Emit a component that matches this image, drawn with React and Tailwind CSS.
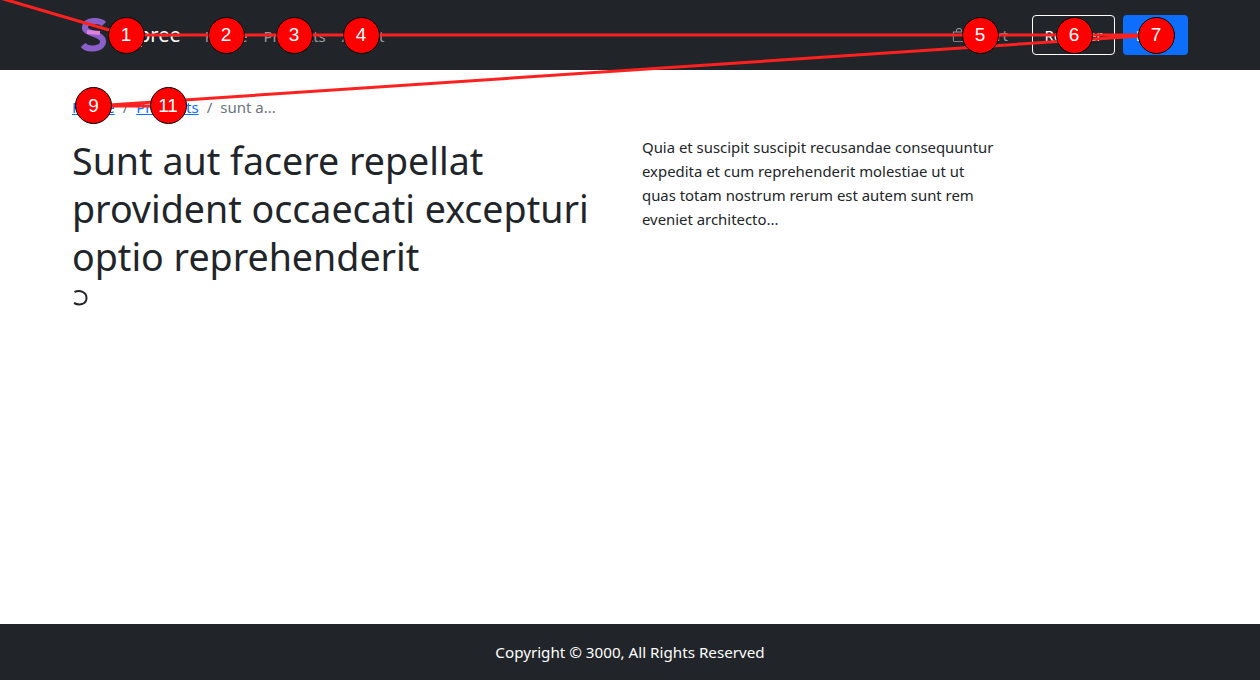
const pins = [
  { n: "1", x: 126, y: 35 },
  { n: "2", x: 226, y: 35 },
  { n: "3", x: 294, y: 35 },
  { n: "4", x: 361, y: 35 },
  { n: "5", x: 980, y: 35 },
  { n: "6", x: 1074, y: 35 },
  { n: "7", x: 1156, y: 35 },
  { n: "9", x: 93.5, y: 105.5 },
  { n: "11", x: 168, y: 105.5 },
];

function Overlay() {
  return (
    <div className="absolute inset-0 overflow-hidden pointer-events-none">
      <svg className="absolute left-0 top-0" width="1260" height="680" fill="none">
        <polyline
          points="0,-2 126,35 226,35 294,35 361,35 980,35 1074,35 1156,35 94,106 168,106"
          stroke="#ff2020"
          strokeWidth="3"
          strokeLinejoin="round"
        />
      </svg>
      {pins.map((p) => (
        <div
          key={p.n}
          className="absolute w-[37px] h-[37px] -ml-[18.5px] -mt-[18.5px] rounded-full bg-[#ff0000] border border-black flex items-center justify-center text-white text-[19px] font-['Liberation_Sans',sans-serif]"
          style={{ left: p.x, top: p.y }}
        >
          {p.n}
        </div>
      ))}
    </div>
  );
}

export default function App() {
  return (
    <div className="relative h-[680px] flex flex-col bg-white text-[#212529] text-[15px] leading-6 font-['Noto_Sans','Open_Sans',sans-serif]">
      <nav className="h-[70px] shrink-0 bg-[#212529]">
        <div className="w-[1140px] mx-auto h-full px-3 flex items-center justify-between">
          <div className="flex items-center">
            <div className="flex items-center ml-2 mr-6">
              <svg width="28" height="34" viewBox="0 0 28 34" fill="none">
                <path d="M24 6 C20 2 6 1 5 9 C4 16 22 15 23 23 C24 31 8 33 3 27" stroke="#8a5fc9" strokeWidth="6" />
                <path d="M7 14 L20 15" stroke="#e07fdc" strokeWidth="4" />
              </svg>
              <span className="text-white text-[20px] ml-[19px]">Spree</span>
            </div>
            <div className="flex items-center gap-4 text-[rgba(255,255,255,0.55)] pt-px">
              <span>Home</span>
              <span>Products</span>
              <span>About</span>
            </div>
          </div>
          <div className="flex items-center">
            <div className="flex items-center gap-3 text-[rgba(255,255,255,0.55)] mr-6">
              <svg width="14" height="16" viewBox="0 0 16 16" fill="currentColor">
                <path d="M8 1a2.5 2.5 0 0 1 2.5 2.5V4h-5v-.5A2.5 2.5 0 0 1 8 1zm3.5 3v-.5a3.5 3.5 0 1 0-7 0V4H1v10a2 2 0 0 0 2 2h10a2 2 0 0 0 2-2V4h-3.5zM2 5h12v9a1 1 0 0 1-1 1H3a1 1 0 0 1-1-1V5z" />
              </svg>
              <span>Cart</span>
            </div>
            <button className="h-10 w-[83px] border border-white rounded text-white text-[15px] mr-2">Register</button>
            <button className="h-10 w-[65px] bg-[#0d6efd] rounded text-white text-[15px]">Login</button>
          </div>
        </div>
      </nav>
      <main className="flex-1">
        <div className="w-[1140px] mx-auto px-3">
          <div className="flex items-center pt-[9px] h-[65px] text-[#6c757d]">
            <a className="text-[#0d6efd] underline">Home</a>
            <span className="px-2">/</span>
            <a className="text-[#0d6efd] underline">Products</a>
            <span className="px-2">/</span>
            <span>sunt a...</span>
          </div>
          <div className="flex">
            <div className="w-[570px] pr-6 shrink-0">
              <h1 className="text-[37.6px] leading-[48px] font-normal mt-[2px]">
                Sunt aut facere repellat provident occaecati excepturi optio reprehenderit
              </h1>
              <svg className="mt-[8px]" width="16" height="18" viewBox="0 0 16 18" fill="none">
                <path d="M2.5 3 C8 0.5 14.5 3 14.5 9 C14.5 15 8 17 2 14" stroke="#212529" strokeWidth="2" />
              </svg>
            </div>
            <p className="w-[356px] text-[14.9px] leading-6">
              Quia et suscipit suscipit recusandae consequuntur expedita et cum reprehenderit molestiae ut ut quas totam nostrum rerum est autem sunt rem eveniet architecto...
            </p>
          </div>
        </div>
      </main>
      <footer className="h-14 shrink-0 bg-[#212529] text-white flex items-center justify-center text-[15.2px]">
        Copyright © 3000, All Rights Reserved
      </footer>
      <Overlay />
    </div>
  );
}
